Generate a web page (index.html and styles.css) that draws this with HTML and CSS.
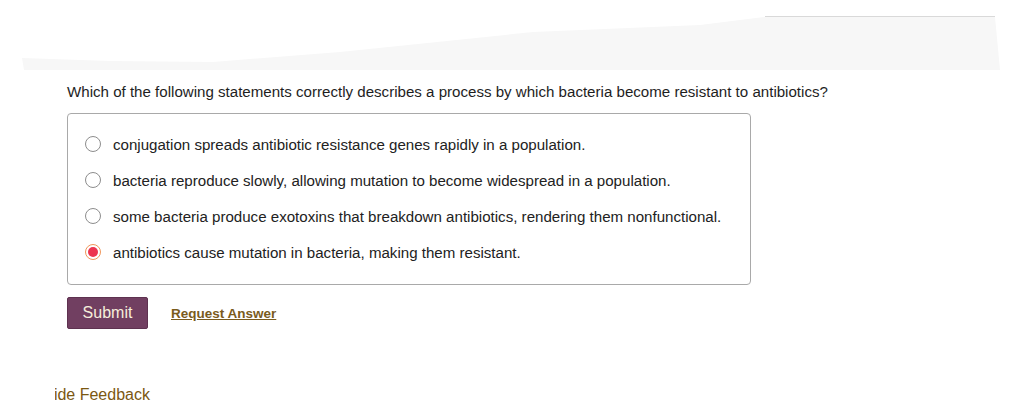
FILE: index.html
```html
<!DOCTYPE html>
<html lang="en">
<head>
<meta charset="utf-8">
<title>Question</title>
<link rel="stylesheet" href="styles.css">
</head>
<body>
<div class="banner">
  <svg class="banner-svg" width="1024" height="70" viewBox="0 0 1024 70" xmlns="http://www.w3.org/2000/svg">
    <polygon points="22,58 110,61 213,62 340,52 533,32 700,25 765,17 995,17 1000,70 24,70" fill="#f7f7f7"/>
    <line x1="765" y1="16.5" x2="995" y2="16.5" stroke="#d9d9d9" stroke-width="1.2"/>
  </svg>
</div>
<main class="content">
  <p class="question">Which of the following statements correctly describes a process by which bacteria become resistant to antibiotics?</p>
  <div class="options">
    <label class="option"><span class="radio"></span><span class="option-text">conjugation spreads antibiotic resistance genes rapidly in a population.</span></label>
    <label class="option"><span class="radio"></span><span class="option-text">bacteria reproduce slowly, allowing mutation to become widespread in a population.</span></label>
    <label class="option"><span class="radio"></span><span class="option-text">some bacteria produce exotoxins that breakdown antibiotics, rendering them nonfunctional.</span></label>
    <label class="option"><span class="radio checked"><span class="dot"></span></span><span class="option-text">antibiotics cause mutation in bacteria, making them resistant.</span></label>
  </div>
  <div class="actions">
    <button class="submit" type="button">Submit</button>
    <a class="request" href="#">Request Answer</a>
  </div>
</main>
<div class="feedback-clip"><span class="feedback-text">Provide Feedback</span></div>
</body>
</html>
```
FILE: styles.css
```css
html, body {
  margin: 0;
  padding: 0;
  background: #ffffff;
  font-family: "Liberation Sans", Arial, sans-serif;
  overflow: hidden;
}
.banner {
  height: 70px;
}
.banner-svg {
  display: block;
}
.content {
  padding-left: 67px;
}
.question {
  margin: 14px 0 0 0;
  font-size: 15.1px;
  line-height: 16px;
  color: #1e1e1e;
}
.options {
  margin-top: 13px;
  width: 665px;
  border: 1px solid #a9a9a9;
  border-radius: 4px;
  padding: 12px 0 14px 17px;
  box-sizing: content-box;
}
.option {
  display: flex;
  align-items: center;
  height: 36px;
  gap: 12px;
  font-size: 15.1px;
  color: #222222;
}
.radio {
  width: 16px;
  height: 16px;
  box-sizing: border-box;
  border: 1px solid #8d8d8d;
  border-radius: 50%;
  background: #ffffff;
  display: flex;
  align-items: center;
  justify-content: center;
  flex: none;
}
.radio.checked {
  border: 1.5px solid #f0965a;
}
.dot {
  width: 10px;
  height: 10px;
  border-radius: 50%;
  background: #ec3450;
}
.actions {
  margin-top: 12px;
  display: flex;
  align-items: center;
  gap: 23px;
}
.submit {
  width: 81px;
  height: 32px;
  background: #713f61;
  border: 1px solid #5e3250;
  border-radius: 2px;
  color: #f6eedb;
  font-family: "Liberation Sans", Arial, sans-serif;
  font-size: 16px;
  padding: 0;
}
.request {
  font-size: 13.5px;
  font-weight: bold;
  color: #7a5b1c;
  text-decoration: underline;
}
.feedback-clip {
  margin-top: 57px;
  margin-left: 55px;
  overflow: hidden;
  white-space: nowrap;
  height: 18px;
}
.feedback-text {
  display: inline-block;
  margin-left: -34px;
  font-size: 16px;
  line-height: 18px;
  color: #7b5812;
}
```
